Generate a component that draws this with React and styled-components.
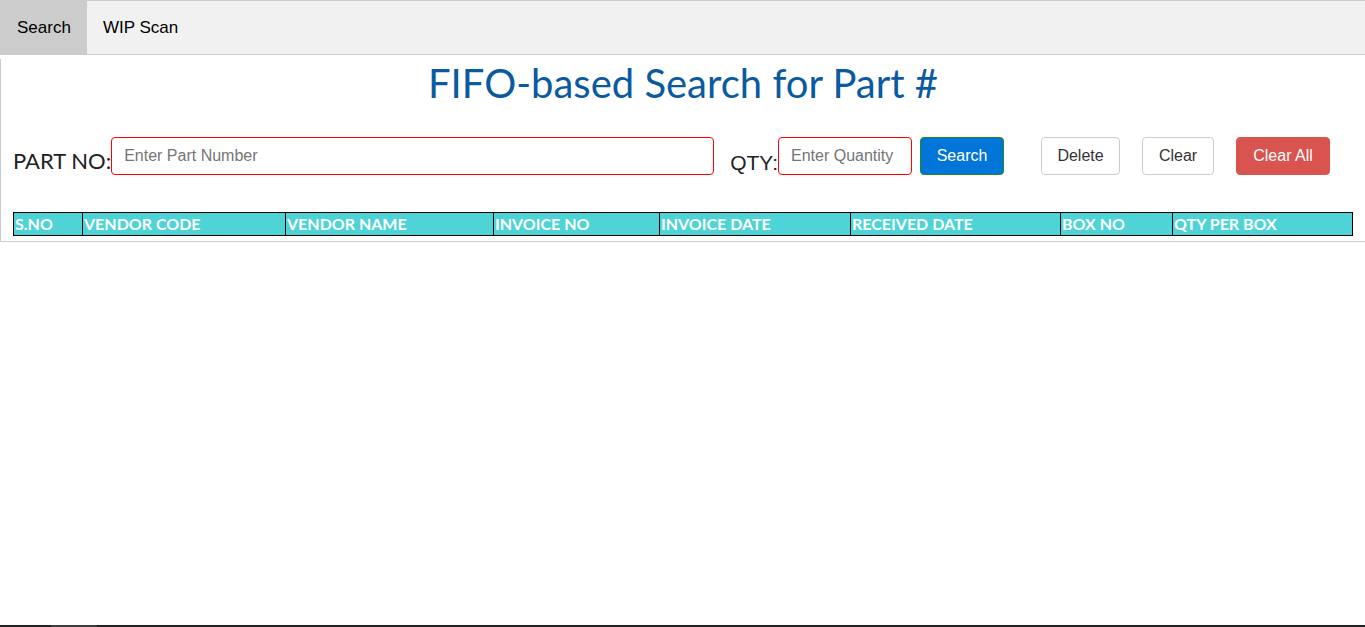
import React from "react";
import styled, { createGlobalStyle } from "styled-components";

const Global = createGlobalStyle`
  html, body { margin: 0; padding: 0; background: #fff; }
  body { overflow-x: hidden; font-family: "Liberation Sans", Arial, sans-serif; }
  * { box-sizing: border-box; }
`;

const Page = styled.div`
  min-height: 100vh;
  display: flex;
  flex-direction: column;
`;

const Frame = styled.div`
  width: 1366px;
`;

const TabBar = styled.div`
  display: flex;
  height: 55px;
  border: 1px solid #ccc;
  background: #f1f1f1;
`;

const Tab = styled.button`
  height: 53px;
  padding: 0 16px;
  border: none;
  outline: none;
  background: ${(p) => (p.$active ? "#ccc" : "inherit")};
  font-family: "Liberation Sans", Arial, sans-serif;
  font-size: 17px;
  color: #000;
  cursor: pointer;
`;

const Content = styled.div`
  border: 1px solid #ccc;
  border-top: none;
  padding: 0 12px 5px;
`;

const Title = styled.h2`
  margin: 4px 0 0;
  font-family: Lato, "Liberation Sans", sans-serif;
  font-weight: 400;
  font-size: 40px;
  line-height: 48px;
  color: #0b5a9f;
  text-align: center;
`;

const FormRow = styled.div`
  display: flex;
  align-items: flex-start;
  margin-top: 30px;
  height: 38px;
`;

const Label = styled.label`
  margin-top: ${(p) => p.$offset}px;
  margin-left: ${(p) => p.$gap || 0}px;
  font-family: ${(p) =>
    p.$lato ? 'Lato, "Liberation Sans", sans-serif' : '"Liberation Sans", Arial, sans-serif'};
  font-size: ${(p) => p.$size}px;
  line-height: ${(p) => p.$lh}px;
  color: #222;
  white-space: nowrap;
`;

const Input = styled.input`
  width: ${(p) => p.$w}px;
  height: 38px;
  padding: 0 12px;
  border: 1px solid #f00;
  border-radius: 4px;
  font-family: "Liberation Sans", Arial, sans-serif;
  font-size: 16px;
  color: #333;
  outline: none;
  &::placeholder { color: #757575; }
`;

const Button = styled.button`
  flex: none;
  width: ${(p) => p.$w}px;
  height: 38px;
  margin-left: ${(p) => p.$gap}px;
  padding: 0;
  border: 1px solid ${(p) => p.$border};
  border-radius: 4px;
  background: ${(p) => p.$bg};
  color: ${(p) => p.$color};
  font-family: "Liberation Sans", Arial, sans-serif;
  font-size: 16px;
  text-align: center;
  cursor: pointer;
`;

const Table = styled.table`
  margin-top: 37px;
  width: 1339px;
  border-collapse: collapse;
  table-layout: fixed;
`;

const Th = styled.th`
  padding: 1px;
  border: 1px solid #000;
  background: #4ed3d6;
  color: #fff;
  font-family: Lato, "Liberation Sans", sans-serif;
  font-weight: 700;
  font-size: 16px;
  line-height: 20px;
  text-align: left;
  white-space: nowrap;
  overflow: hidden;
`;

const Spacer = styled.div`
  flex: 1;
`;

const ScrollTrack = styled.div`
  height: 2px;
  background: #202020;
  display: flex;
`;

const ScrollThumb = styled.div`
  margin-left: 51px;
  width: 46px;
  background: #3d3d3d;
`;

const columns = [
  ["S.NO", 69],
  ["VENDOR CODE", 203],
  ["VENDOR NAME", 208],
  ["INVOICE NO", 166],
  ["INVOICE DATE", 191],
  ["RECEIVED DATE", 210],
  ["BOX NO", 112],
  ["QTY PER BOX", 180],
];

export default function App() {
  return (
    <Page>
      <Global />
      <Frame>
        <TabBar>
          <Tab $active>Search</Tab>
          <Tab>WIP Scan</Tab>
        </TabBar>
        <Content>
          <Title>FIFO-based Search for Part #</Title>
          <FormRow>
            <Label $lato $size={22} $lh={26} $offset={11}>PART NO:</Label>
            <Input $w={603} placeholder="Enter Part Number" />
            <Label $size={21} $lh={24} $offset={14} $gap={16}>QTY:</Label>
            <Input $w={134} placeholder="Enter Quantity" />
            <Button $w={84} $gap={8} $bg="#0275d8" $border="#1f8a1f" $color="#fff">Search</Button>
            <Button $w={79} $gap={37} $bg="#fff" $border="#ccc" $color="#333">Delete</Button>
            <Button $w={72} $gap={22} $bg="#fff" $border="#ccc" $color="#333">Clear</Button>
            <Button $w={94} $gap={22} $bg="#d9534f" $border="#d9534f" $color="#fff">Clear All</Button>
          </FormRow>
          <Table>
            <colgroup>
              {columns.map(([name, w]) => (
                <col key={name} style={{ width: w }} />
              ))}
            </colgroup>
            <thead>
              <tr>
                {columns.map(([name]) => (
                  <Th key={name}>{name}</Th>
                ))}
              </tr>
            </thead>
          </Table>
        </Content>
      </Frame>
      <Spacer />
      <ScrollTrack>
        <ScrollThumb />
      </ScrollTrack>
    </Page>
  );
}
